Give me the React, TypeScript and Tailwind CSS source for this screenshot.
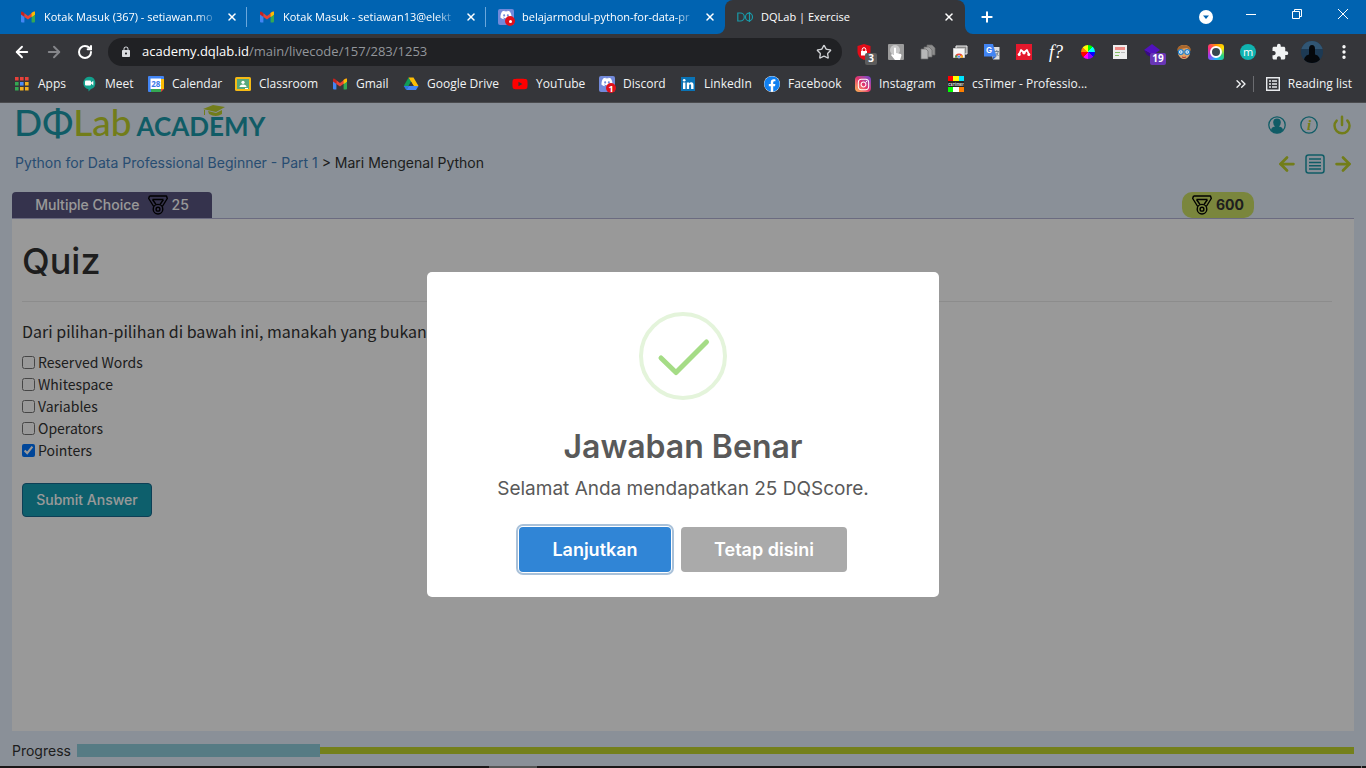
import type { ReactNode } from "react";
import { ArrowLeft, ArrowRight, ChevronsRight, EllipsisVertical, Plus, Power, RotateCw, Star, X } from "lucide-react";
import { FaDiscord, FaFacebook, FaInstagram, FaLinkedin, FaYoutube } from "react-icons/fa";
import { MdExtension, MdLock } from "react-icons/md";

const GmailIcon = () => (
  <svg viewBox="0 0 16 16" className="size-4 shrink-0">
    <path d="M1 4v8.500q0 1 1 1h2.400V7z" fill="#4285f4" />
    <path d="M15 4v8.500q0 1-1 1h-2.400V7z" fill="#34a853" />
    <path d="M11.600 3.800 15 3.400v2L11.600 8z" fill="#fbbc04" />
    <path d="M1 3.500v2L4.400 8V4.300L3 3Q1 2 1 3.500z" fill="#c5221f" />
    <path d="M4.400 4.300 8 7l3.600-2.700L13 3q2-1 2 .5l-3.400 4.300L8 10.500 4.400 7.900z" fill="#ea4335" />
    <path d="M11.600 4.300 13 3q2-1 2 .5v2L11.600 8z" fill="#fbbc04" />
  </svg>
);

const AppsIcon = () => (
  <svg viewBox="0 0 16 16" className="size-4 shrink-0">
    <path d="M1 1h3.600v3.600H1zM6 1h3.600v3.600H6zM11 1h3.600v3.600H11z" fill="#e8413a" />
    <path d="M1 6h3.600v3.600H1zM1 11h3.600v3.600H1z" fill="#34a853" />
    <path d="M6 6h3.600v3.600H6z" fill="#4c8df6" />
    <path d="M11 6h3.600v3.600H11zM6 11h3.600v3.600H6zM11 11h3.600v3.600H11z" fill="#f2b01e" />
  </svg>
);

const MeetIcon = () => (
  <svg viewBox="0 0 16 16" className="size-4 shrink-0">
    <path d="M8 .8a6.300 6.300 0 0 1 2 12.300L7.500 15.500v-2.200A6.300 6.300 0 0 1 8 .8z" fill="#12a08c" />
    <rect x="4" y="4.600" width="6" height="5" rx="1" fill="#fff" />
    <path d="m9.500 7 2.800-2.200v4.600z" fill="#fff" />
  </svg>
);

const CalendarIcon = () => (
  <svg viewBox="0 0 16 16" className="size-4 shrink-0">
    <path d="M1 0h14q1 0 1 1v11l-4 4H1q-1 0-1-1V1q0-1 1-1z" fill="#4285f4" />
    <path d="M13 3h3v10h-3z" fill="#fbbc04" />
    <path d="M3 13h10v3H3z" fill="#34a853" />
    <path d="M13 13h3l-3 3z" fill="#ea4335" />
    <path d="M2.500 2.500h10.500v10.500h-10.500z" fill="#fff" />
    <text x="7.800" y="10.800" textAnchor="middle" fontSize="8" fontWeight="700" fontFamily="Open Sans, sans-serif" fill="#3b78e7">28</text>
  </svg>
);

const ClassroomIcon = () => (
  <svg viewBox="0 0 16 16" className="size-4 shrink-0">
    <rect y="1" width="16" height="14" rx="1.500" fill="#f5ba15" />
    <path d="M2 3h12v10H2z" fill="#57a87c" />
    <circle cx="8" cy="6.300" r="1.600" fill="#fff" />
    <path d="M4.500 11q0-2.500 3.500-2.500t3.500 2.500z" fill="#fff" />
    <path d="M10 12h3v1h-3z" fill="#fff" />
  </svg>
);

const DriveIcon = () => (
  <svg viewBox="0 0 16 16" className="size-4 shrink-0">
    <path d="M5.500 1.500 1 9.500 3.300 14 8 5.800z" fill="#0f9d58" />
    <path d="M5.500 1.500h5L15.500 10h-4.800z" fill="#fbbc04" />
    <path d="M5.500 10H15.500L13 14H3.300z" fill="#4285f4" />
    <path d="M.7 10 5.700 10 3.300 14z" fill="#2f74e8" />
    <path d="M8 5.800 10.700 10H5.700z" fill="#35363a" />
  </svg>
);

const DiscordIcon = ({ badge }: { badge: ReactNode }) => (
  <span className="relative flex size-4 shrink-0 items-center justify-center rounded-xs bg-[#7289da] text-white">
    <FaDiscord className="mb-1 size-3" />
    <span className="absolute -right-px -bottom-px flex size-[10px] items-center justify-center rounded-full bg-[#e0101b] text-[9px] leading-none font-bold">
      {badge}
    </span>
  </span>
);

const LinkedInIcon = () => (
  <span className="flex size-4 shrink-0 items-center justify-center">
    <svg viewBox="0 0 16 16" className="size-4">
      <path d="M1 1h14v14H1z" fill="#0a73b5" />
      <circle cx="4.200" cy="4.300" r="1.300" fill="#fff" />
      <path d="M3 6.500h2.400V13H3zM6.800 6.500h2.300v1q.8-1.200 2.200-1.200 2.200 0 2.200 2.700v4h-2.400V9.600q0-1.300-1-1.300t-1 1.300V13H6.800z" fill="#fff" />
    </svg>
  </span>
);

const InstagramIcon = () => (
  <span className="flex size-4 shrink-0 items-center justify-center rounded-[4px] bg-linear-to-tr from-[#fdb84b] via-[#e1306c] to-[#6a3ad6] text-white">
    <FaInstagram className="size-[13px]" />
  </span>
);

const TimerIcon = () => (
  <svg viewBox="0 0 16 16" className="size-4 shrink-0">
    <path d="M0 0h16v16H0z" fill="#222" />
    <path d="M0 0h5v5H0z" fill="red" />
    <path d="M5 0h6v5H5z" fill="#ff0" />
    <path d="M11 0h5v5h-5z" fill="#00e5ff" />
    <path d="M0 11h5v5H0z" fill="#0f0" />
    <path d="M5 11h6v5H5z" fill="#fff" />
    <path d="M11 11h5v5h-5z" fill="#ff8000" />
    <text x="8" y="9.700" textAnchor="middle" fontSize="4" fontWeight="700" fontFamily="Inter, sans-serif" fill="#ddd">csTimer</text>
  </svg>
);

const DqIcon = () => (
  <svg viewBox="0 0 16 16" className="size-4 shrink-0" fill="none" stroke="#199aa8" strokeWidth="1.200">
    <path d="M.8 4h2.500a3.900 3.900 0 0 1 0 8H.8zM12.500 3v10" />
    <ellipse cx="12" cy="8" rx="3.500" ry="3.800" />
  </svg>
);

const Medal = () => (
  <svg viewBox="0 0 20 20" className="size-5" fill="none" stroke="#000" strokeWidth="1.400" strokeLinejoin="round">
    <path d="M1.500 1h17l.8 2.500L14.300 11.500M1.500 1 .7 3.500 5.700 11.500M4.500 4.500h11M4.500 4.500 8 9.500M15.500 4.500 12 9.500" />
    <circle cx="10" cy="14.200" r="4.800" />
    <circle cx="10" cy="14.200" r="1.900" />
  </svg>
);

const bookmarks: { label: string; icon: ReactNode; width: string }[] = [
  { label: "Apps", icon: <AppsIcon />, width: "w-[67px]" },
  { label: "Meet", icon: <MeetIcon />, width: "w-[67px]" },
  { label: "Calendar", icon: <CalendarIcon />, width: "w-[87px]" },
  { label: "Classroom", icon: <ClassroomIcon />, width: "w-[97px]" },
  { label: "Gmail", icon: <GmailIcon />, width: "w-[71px]" },
  { label: "Google Drive", icon: <DriveIcon />, width: "w-[109px]" },
  {
    label: "YouTube",
    icon: (
      <span className="flex size-4 shrink-0 items-center justify-center">
        <FaYoutube className="size-4 text-[#f00]" />
      </span>
    ),
    width: "w-[87px]",
  },
  { label: "Discord", icon: <DiscordIcon badge="1" />, width: "w-[81px]" },
  { label: "LinkedIn", icon: <LinkedInIcon />, width: "w-[84px]" },
  { label: "Facebook", icon: <FaFacebook className="size-4 shrink-0 rounded-full bg-white text-[#1180f0]" />, width: "w-[91px]" },
  { label: "Instagram", icon: <InstagramIcon />, width: "w-[93px]" },
  { label: "csTimer - Professio...", icon: <TimerIcon />, width: "w-[150px]" },
];

const tabs: { title: string; icon: ReactNode; divider: string }[] = [
  { title: "Kotak Masuk (367) - setiawan.mo", icon: <GmailIcon />, divider: "border-[#6aa7dc]" },
  { title: "Kotak Masuk - setiawan13@elekt", icon: <GmailIcon />, divider: "border-[#6aa7dc]" },
  {
    title: "belajarmodul-python-for-data-pr",
    icon: <DiscordIcon badge={<span className="size-[3px] rounded-full bg-white" />} />,
    divider: "border-transparent",
  },
];

const extensions: { name: string; icon: ReactNode }[] = [
  {
    name: "Ad blocker",
    icon: (
      <span className="relative">
        <svg viewBox="0 0 16 16" className="size-4">
          <path d="M8 0 14.500 2v6q0 5-6.500 8Q1.500 13 1.500 8V2z" fill="#e30b17" />
          <path d="M5 7h6v4.500H5z" fill="#fff" />
          <path d="M6.200 7V5.500a1.800 1.800 0 0 1 3.600 0V7" fill="none" stroke="#fff" />
        </svg>
        <span className="absolute top-[9px] left-[9px] flex h-3 w-3 items-center justify-center rounded-xs bg-[#5c5c5c] text-[10px] font-bold text-white">3</span>
      </span>
    ),
  },
  {
    name: "Click helper",
    icon: (
      <svg viewBox="0 0 16 16" className="size-4">
        <rect width="16" height="16" rx="1" fill="#9b9b9b" />
        <circle cx="7" cy="6" r="5" fill="#c8c8c8" />
        <path d="M6 4q1-1 2 0v5l5 1q1 1 0 3l-1 3H7l-4-5 1-1 2 1z" fill="#fff" />
      </svg>
    ),
  },
  {
    name: "Documents",
    icon: (
      <svg viewBox="0 0 16 16" className="size-4" stroke="#6c6c6c" strokeWidth=".7">
        <path d="M7 1h5l3 3v7H7z" fill="#8d8d8d" />
        <path d="M4 3h5l3 3v7H4z" fill="#a2a2a2" />
        <path d="M1 5h5l2 2v8H1z" fill="#b7b7b7" />
      </svg>
    ),
  },
  {
    name: "Web store",
    icon: (
      <svg viewBox="0 0 16 16" className="size-4">
        <path d="M4 2h11v8H4z" fill="#888" stroke="#eee" />
        <path d="M1.500 4.500h11v9h-11z" fill="#f6f6f6" stroke="#ccc" />
        <path d="M3 13.500a4 4 0 0 1 8 0z" fill="#ea4335" />
        <path d="M3 13.500a4 4 0 0 1 1-2.600l3 2.600z" fill="#34a853" />
        <path d="M11 13.500a4 4 0 0 0-1-2.600l-3 2.600z" fill="#fbbc04" />
        <circle cx="7" cy="12.700" r="1.400" fill="#4285f4" stroke="#fff" strokeWidth=".5" />
      </svg>
    ),
  },
  {
    name: "Translate",
    icon: (
      <svg viewBox="0 0 16 16" className="size-4">
        <path d="M6 3h9.500v12.500H9z" fill="#dedede" />
        <path d="M0 0h9l3.500 12.500H0z" fill="#4285f4" />
        <path d="M9 12.500h3.500L9 15.500z" fill="#2a5fc4" />
        <text x="2" y="9" fontSize="8" fontWeight="700" fontFamily="Inter, sans-serif" fill="#fff">G</text>
        <path d="M10.500 7.500h4.500M12.800 6v1.500M11.500 12q2.500-1.500 2.700-4.500M11.800 9l2.700 3" stroke="#62748c" fill="none" strokeWidth=".8" />
      </svg>
    ),
  },
  {
    name: "Reference manager",
    icon: (
      <svg viewBox="0 0 16 16" className="size-4">
        <path d="M0 0h16v16H0z" fill="#e5182c" />
        <path d="M3 10.500 5 6l3 2.500L11 6l2 4.500" fill="none" stroke="#fff" strokeWidth="1.800" strokeLinejoin="round" />
        <circle cx="8" cy="8.800" r="1.700" fill="#fff" />
        <circle cx="3.200" cy="10.500" r="1.500" fill="#fff" />
        <circle cx="12.800" cy="10.500" r="1.500" fill="#fff" />
      </svg>
    ),
  },
  { name: "Font finder", icon: <span className="font-['Liberation_Serif',serif] text-lg leading-none text-white italic">f?</span> },
  {
    name: "Color picker",
    icon: (
      <span className="size-[14px] rounded-full bg-[conic-gradient(#0f0_0_12%,#0ff_12%_25%,#00f_25%_37%,#80f_37%_50%,#f0f_50%_62%,#f00_62%_75%,#f80_75%_87%,#ff0_87%)]" />
    ),
  },
  {
    name: "Notes",
    icon: (
      <svg viewBox="0 0 16 16" className="size-4">
        <path d="M1 1h14v14H1z" fill="#eee" />
        <path d="M3 3h10v3H3z" fill="#ef8b87" />
        <path d="M3 8h5v1H3zM3 11h4v1H3z" fill="#84bf65" />
        <path d="M9 8h4v1H9z" fill="#bbb" />
      </svg>
    ),
  },
  {
    name: "Study cards",
    icon: (
      <span className="relative">
        <svg viewBox="0 0 16 16" className="size-4">
          <path d="m8 0 8 6-7 5-9-5z" fill="#5112bd" />
          <path d="m0 6 9 5v3L3 11z" fill="#390985" />
        </svg>
        <span className="absolute top-[9px] left-[6px] flex h-3 w-4 items-center justify-center rounded-xs bg-[#6836b5] text-[10px] font-bold text-white">19</span>
      </span>
    ),
  },
  {
    name: "Reader",
    icon: (
      <svg viewBox="0 0 16 16" className="size-4">
        <path d="M2 5q1-4 6-4t6 4v5q-2 5-6 5t-6-5z" fill="#e0a468" />
        <path d="M1 7q0-6 7-6t7 6l-4-3-6 1z" fill="#a8662c" />
        <circle cx="4.800" cy="8" r="2.400" fill="#fff" stroke="#2281cc" strokeWidth="1.300" />
        <circle cx="11.200" cy="8" r="2.400" fill="#fff" stroke="#2281cc" strokeWidth="1.300" />
        <circle cx="4.800" cy="8" r=".8" fill="#2281cc" />
        <circle cx="11.200" cy="8" r=".8" fill="#2281cc" />
        <path d="M6 13q2 1 4 0" stroke="#a33" fill="none" />
      </svg>
    ),
  },
  {
    name: "Screen capture",
    icon: (
      <span className="flex size-4 items-center justify-center rounded-[3px] bg-[conic-gradient(#ff9500,#ffe000,#27d17f,#19b5fe,#9b3df0,#ff2d78,#ff9500)]">
        <span className="size-3 rounded-full border-2 border-white bg-[#36474f]" />
      </span>
    ),
  },
  {
    name: "Mail tracker",
    icon: <span className="flex size-4 items-center justify-center rounded-full bg-[#10b3b0] pb-[2px] text-[11px] leading-none text-white">m</span>,
  },
  { name: "Extensions", icon: <MdExtension className="size-[18px] text-[#f1f3f4]" /> },
  {
    name: "Profile",
    icon: (
      <svg viewBox="0 0 22 22" className="size-[22px] rounded-full">
        <path d="M0 0h22v22H0z" fill="#1d3a54" />
        <path d="M0 0h22v8H0z" fill="#315674" />
        <path d="M3 22q-1-7 5-8.500V8q0-4 3-4t3 4v5.500q6 1.500 5 8.500z" fill="#05080c" />
      </svg>
    ),
  },
  { name: "Menu", icon: <EllipsisVertical className="size-[18px] text-white" strokeWidth={2.5} /> },
];

const options = ["Reserved Words", "Whitespace", "Variables", "Operators", "Pointers"];

function TabStrip() {
  return (
    <div className="flex h-[34px] bg-[#0063b1] pl-2 text-white">
      {tabs.map((tab) => (
        <div key={tab.title} className="flex w-[239px] shrink-0 items-center">
          <div className={`flex h-5 w-full items-center gap-2 border-r pr-2 pl-3 ${tab.divider}`}>
            {tab.icon}
            <span className="min-w-0 flex-1 mask-r-from-88% text-[11px] whitespace-nowrap">{tab.title}</span>
            <button aria-label="Close tab" className="shrink-0">
              <X className="size-3" strokeWidth={3} />
            </button>
          </div>
        </div>
      ))}
      <div className="relative flex w-[240px] shrink-0 items-center gap-2 rounded-t-lg bg-[#35363a] pr-[10px] pl-3">
        <svg viewBox="0 0 8 8" className="absolute bottom-0 -left-2 size-2" fill="#35363a">
          <path d="M8 0v8H0a8 8 0 0 0 8-8z" />
        </svg>
        <svg viewBox="0 0 8 8" className="absolute -right-2 bottom-0 size-2" fill="#35363a">
          <path d="M0 0v8h8a8 8 0 0 1-8-8z" />
        </svg>
        <DqIcon />
        <span className="flex-1 text-[11px] whitespace-nowrap">DQLab | Exercise</span>
        <button aria-label="Close tab">
          <X className="size-3" strokeWidth={3} />
        </button>
      </div>
      <button aria-label="New tab" className="ml-3 flex w-5 items-center justify-center">
        <Plus className="size-4" strokeWidth={3} />
      </button>
      <div className="ml-auto flex items-start">
        <button aria-label="Search tabs" className="flex h-[34px] w-11 items-center justify-center">
          <svg viewBox="0 0 14 14" className="size-[14px]">
            <circle cx="7" cy="7" r="7" fill="#fff" />
            <path d="M4 5.500h6L7 9z" fill="#0063b1" />
          </svg>
        </button>
        <button aria-label="Minimize" className="flex h-7 w-[46px] items-center justify-center">
          <span className="h-px w-[10px] bg-white" />
        </button>
        <button aria-label="Restore" className="flex h-7 w-[46px] items-center justify-center">
          <svg viewBox="0 0 10 10" className="size-[10px]" fill="none" stroke="#fff">
            <path d="M.5 2.500h7v7h-7zM2.500 2.500v-2h7v7h-2" />
          </svg>
        </button>
        <button aria-label="Close window" className="flex h-7 w-[46px] items-center justify-center">
          <svg viewBox="0 0 10 10" className="size-[10px]" stroke="#fff">
            <path d="m0 0 10 10M10 0 0 10" />
          </svg>
        </button>
      </div>
    </div>
  );
}

function Toolbar() {
  return (
    <div className="flex h-9 items-center bg-[#35363a] pr-[6px] text-white">
      <div className="flex w-[108px] shrink-0 items-center gap-[14px] pl-[13px]">
        <button aria-label="Back"><ArrowLeft className="size-[18px]" strokeWidth={2.5} /></button>
        <button aria-label="Forward"><ArrowRight className="size-[18px] text-[#85868a]" strokeWidth={2.5} /></button>
        <button aria-label="Reload"><RotateCw className="size-4" strokeWidth={3} /></button>
      </div>
      <div className="flex h-7 min-w-0 flex-1 items-center rounded-full bg-[#202124] pr-[10px] pl-3">
        <MdLock className="size-3 text-[#dadce0]" />
        <span className="flex-1 pl-[10px] text-[13px] text-[#93969b]">
          <span className="text-white">academy.dqlab.id</span>/main/livecode/157/283/1253
        </span>
        <button aria-label="Bookmark this page"><Star className="size-4 text-[#d0d2d5]" /></button>
      </div>
      <div className="flex shrink-0 pl-[6px]">
        {extensions.map((item) => (
          <button key={item.name} aria-label={item.name} className="flex h-8 w-8 items-center justify-center">
            {item.icon}
          </button>
        ))}
      </div>
    </div>
  );
}

function BookmarksBar() {
  return (
    <nav className="flex h-[33px] items-center border-b border-[#4a4b4e] bg-[#35363a] px-[14px] pb-1 text-[#f1f3f4]">
      {bookmarks.map((item) => (
        <a key={item.label} href="#" className={`flex shrink-0 items-center gap-2 whitespace-nowrap ${item.width}`}>
          {item.icon}
          {item.label}
        </a>
      ))}
      <button aria-label="More bookmarks" className="ml-auto"><ChevronsRight className="size-4" /></button>
      <span className="mr-2 ml-1 h-4 w-px bg-[#6b6c70]" />
      <button className="flex items-center gap-2 pl-1 whitespace-nowrap">
        <svg viewBox="0 0 14 14" className="size-[14px]" fill="none" stroke="#e8eaed" strokeWidth="1.400">
          <path d="M.7.7h12.600v12.600H.7z" />
          <path d="M3 4h2M6 4h5M3 7h2M6 7h5M3 10h2M6 10h5" />
        </svg>
        Reading list
      </button>
    </nav>
  );
}

function Logo() {
  return (
    <a href="#" aria-label="DQLab Academy" className="relative flex items-baseline pt-[2px] font-['Lato',sans-serif] leading-[40px] whitespace-nowrap text-[#1c9aab]">
      <span className="text-[37px] font-medium">DΦ</span>
      <span className="text-[37px] font-medium text-[#bfd02c]">Lab</span>
      <span className="pl-[5px] text-[26px] font-bold">ACADEMY</span>
      <svg viewBox="0 0 22 12" className="absolute top-[5px] right-10 h-3 w-[22px]" fill="#bfd02c">
        <path d="m0 4 10-4 12 2-9 5zM5 6l8 2 6-3v4q-6 4-13 0zM1 5h1v5H1z" />
      </svg>
    </a>
  );
}

function PageContent() {
  return (
    <div className="flex flex-1 flex-col bg-[#e6f1fd] px-3">
      <header className="flex h-10 items-center justify-between pr-[2px] pl-[2px]">
        <Logo />
        <div className="flex items-center gap-[14px] pt-[3px]">
          <button aria-label="Profile">
            <svg viewBox="0 0 18 18" className="size-[18px]">
              <circle cx="9" cy="9" r="8.200" fill="none" stroke="#1c9aab" strokeWidth="1.300" />
              <path d="M3 14.500q0-3.500 4-4Q5 8.500 5.200 6 5.500 2.600 9 2.600T12.800 6q.2 2.500-1.800 4.500 4 .5 4 4-6 5.500-12 0z" fill="#1c9aab" />
            </svg>
          </button>
          <button aria-label="Information">
            <svg viewBox="0 0 18 18" className="size-[18px]">
              <circle cx="9" cy="9" r="8.200" fill="none" stroke="#1c9aab" strokeWidth="1.300" />
              <text x="9" y="14" textAnchor="middle" fontFamily="Liberation Serif, serif" fontSize="15" fontWeight="700" fontStyle="italic" fill="#bfd02c">i</text>
            </svg>
          </button>
          <button aria-label="Log out"><Power className="size-5 text-[#bfd02c]" strokeWidth={3} /></button>
        </div>
      </header>
      <div className="flex h-10 items-center justify-between pl-[3px] text-sm">
        <p>
          <a href="#" className="text-[#4380bd]">Python for Data Professional Beginner - Part 1</a>
          <span className="text-[#333]"> &gt; Mari Mengenal Python</span>
        </p>
        <div className="flex items-center gap-[7px] pt-[2px]">
          <button aria-label="Previous"><ArrowLeft className="size-[22px] text-[#bfd02c]" strokeWidth={3} /></button>
          <button aria-label="Lesson list">
            <svg viewBox="0 0 20 20" className="size-5" fill="none" stroke="#1c9aab" strokeWidth="1.500">
              <rect x="1" y="1" width="18" height="18" rx="2.500" />
              <path d="M4 5h12M4 8.400h12M4 11.700h12M4 15h12" />
            </svg>
          </button>
          <button aria-label="Next"><ArrowRight className="size-[22px] text-[#bfd02c]" strokeWidth={3} /></button>
        </div>
      </div>
      <div className="mt-[9px] flex items-center justify-between pr-[100px]">
        <div className="flex h-[26px] w-[200px] items-center justify-center gap-2 rounded-t bg-[#595580] text-sm font-medium text-white">
          Multiple Choice
          <span className="flex items-center gap-1"><Medal />25</span>
        </div>
        <div className="flex h-[26px] items-center gap-1 rounded-[10px] bg-[#cbdf67] px-[10px] text-sm font-bold text-[#333]">
          <Medal />
          600
        </div>
      </div>
      <main className="flex-1 border-t border-[#b3b3d6] bg-white px-[10px] pb-5">
        <h1 className="pt-[14px] text-[36px] leading-[56px] font-medium text-[#333]">Quiz</h1>
        <hr className="mt-3 mr-3 border-[#eaeaea]" />
        <form className="font-['Noto_Sans_CJK_SC',sans-serif] text-[#333]">
          <p className="mt-[15px] mb-[6px] text-base leading-7">Dari pilihan-pilihan di bawah ini, manakah yang bukan</p>
          {options.map((option) => (
            <label key={option} className="flex h-[22px] items-center gap-[3px] text-sm leading-[22px]">
              <input type="checkbox" defaultChecked={option === "Pointers"} className="size-[13px]" />
              {option}
            </label>
          ))}
          <button type="button" className="mt-[22px] h-[34px] w-[130px] rounded border border-[#17698f] bg-[#179fb4] font-['Inter',sans-serif] text-sm font-medium whitespace-nowrap text-white">
            Submit Answer
          </button>
        </form>
      </main>
      <footer className="flex h-[35px] items-center gap-[6px] pt-1 text-sm text-[#333]">
        <span>Progress</span>
        <div role="progressbar" aria-label="Progress" aria-valuenow={19} className="flex flex-1 items-center">
          <div className="h-[13px] w-[19%] bg-[#8fcddc]" />
          <div className="h-[7px] flex-1 bg-[#c2d62f]" />
        </div>
      </footer>
    </div>
  );
}

function SuccessDialog() {
  return (
    <div className="absolute inset-0 flex items-center justify-center bg-black/40">
      <div role="dialog" aria-modal="true" aria-labelledby="dialog-title" className="flex w-[512px] flex-col items-center rounded-[5px] bg-white pt-10 pb-[25px] text-[#595959]">
        <svg viewBox="0 0 88 88" className="size-[88px]" fill="none">
          <circle cx="44" cy="44" r="42" stroke="#e4f4db" strokeWidth="4" />
          <path d="m22 46 15 14.500L67.500 30" stroke="#a5dc86" strokeWidth="5" strokeLinecap="round" strokeLinejoin="round" />
        </svg>
        <h2 id="dialog-title" className="mt-[27px] text-[32px] leading-10 font-semibold">Jawaban Benar</h2>
        <p className="mt-2 text-[19px] leading-7">Selamat Anda mendapatkan 25 DQScore.</p>
        <div className="mt-6 flex gap-[10px] text-lg font-semibold text-white">
          <button className="h-[45px] w-[152px] rounded bg-[#3085d6] ring-2 ring-[#a9c1d9] ring-offset-1 outline-none">Lanjutkan</button>
          <button className="h-[45px] w-[166px] rounded bg-[#aaa]">Tetap disini</button>
        </div>
      </div>
    </div>
  );
}

export default function App() {
  return (
    <div className="flex min-h-screen flex-col overflow-hidden bg-[#1b1718] font-['Open_Sans',sans-serif] text-xs">
      <TabStrip />
      <Toolbar />
      <BookmarksBar />
      <div className="relative flex flex-1 flex-col font-['Inter',sans-serif]">
        <PageContent />
        <SuccessDialog />
      </div>
      <div className="flex h-[2px]">
        <div className="ml-[489px] w-12 bg-[#555]" />
        <div className="mr-1 ml-auto w-px bg-[#777]" />
      </div>
    </div>
  );
}
